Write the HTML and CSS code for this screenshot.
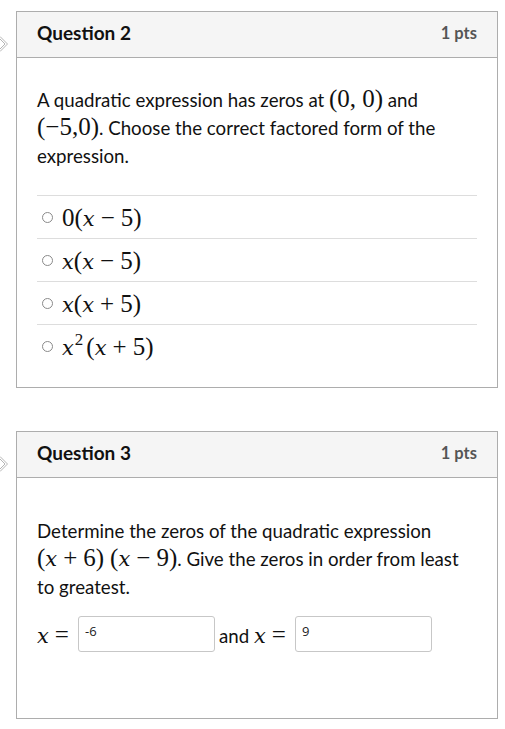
FILE: index.html
```
<!doctype html>
<html lang="en">
<head>
    <meta charset="UTF-8">
    <title>Quiz</title>
    <link rel="stylesheet" href="styles.css">
</head>
<body>
    <div class="question">
        <div class="flag">
            <svg width="16" height="16" viewBox="0 0 16 16"><path d="M0 0.5 L7.5 8 L0 15.5 M0 3 L5 8 L0 13" fill="none" stroke="#b5b5b5" stroke-width="1"/></svg>
        </div>
        <div class="card">
            <div class="header">
                <span class="title">Question 2</span>
                <span class="pts">1 pts</span>
            </div>
            <div class="body">
                <p class="text">A quadratic expression has zeros at <span class="math">(0,<span class="sp"></span>0)</span> and <span class="math">(−5,0)</span>. Choose the correct factored form of the expression.</p>
                <ul class="answers">
                    <li><span class="radio"></span><span class="math">0(<i>x</i><span class="op">−</span>5)</span></li>
                    <li><span class="radio"></span><span class="math"><i>x</i>(<i>x</i><span class="op">−</span>5)</span></li>
                    <li><span class="radio"></span><span class="math"><i>x</i>(<i>x</i><span class="op">+</span>5)</span></li>
                    <li><span class="radio"></span><span class="math"><i>x</i><sup>2</sup>(<i>x</i><span class="op">+</span>5)</span></li>
                </ul>
            </div>
        </div>
    </div>

    <div class="question">
        <div class="flag">
            <svg width="16" height="16" viewBox="0 0 16 16"><path d="M0 0.5 L7.5 8 L0 15.5 M0 3 L5 8 L0 13" fill="none" stroke="#b5b5b5" stroke-width="1"/></svg>
        </div>
        <div class="card">
            <div class="header">
                <span class="title">Question 3</span>
                <span class="pts">1 pts</span>
            </div>
            <div class="body body-fill">
                <p class="text">Determine the zeros of the quadratic expression <span class="math">(<i>x</i><span class="op">+</span>6)<span class="sp"></span>(<i>x</i><span class="op">−</span>9)</span>. Give the zeros in order from least to greatest.</p>
                <div class="fill">
                    <span class="math"><i>x</i><span class="op">=</span></span>
                    <input type="text" class="blank" value="-6">
                    <span>and <span class="math"><i>x</i><span class="op">=</span></span></span>
                    <input type="text" class="blank" value="9">
                </div>
            </div>
        </div>
    </div>
</body>
</html>
```
FILE: styles.css
```
/*reset*/
*{
    margin:0;
    padding:0;
}
ul{
    list-style: none;
}
body{
    font-family: Lato, "Liberation Sans", sans-serif;
    color: #2d3b45;
    background: #ffffff;
    padding-top: 11px;
}

.question{
    display: flex;
    margin-bottom: 43px;
}
.flag{
    width: 16px;
    padding-top: 25px;
}
.flag svg{
    display: block;
}
.card{
    width: 480px;
    border: 1px solid #adadad;
}
.header{
    display: flex;
    justify-content: space-between;
    align-items: center;
    box-sizing: border-box;
    height: 46px;
    padding: 0 20px 4px;
    background: #f5f5f5;
    border-bottom: 1px solid #adadad;
}
.title{
    font-size: 19px;
    font-weight: bold;
    color: #111111;
}
.pts{
    font-size: 16.5px;
    font-weight: bold;
    color: #555555;
}
.body{
    padding: 28px 20px 20px;
}
.body-fill{
    padding-top: 39px;
    height: 181px;
}
.text{
    font-size: 18.7px;
    line-height: 28px;
    color: #111111;
}
.math{
    font-family: "Liberation Serif", "DejaVu Serif", serif;
    font-size: 25px;
    line-height: 1;
    white-space: nowrap;
}
.math i{
    font-family: "DejaVu Serif", "Liberation Serif", serif;
    font-style: italic;
    font-size: 0.84em;
}
.math sup{
    font-size: 17px;
    line-height: 0;
    margin-left: 1px;
    margin-right: 3px;
}
.op{
    margin: 0 0.24em;
}
.sp{
    display: inline-block;
    width: 6px;
}

.answers{
    margin-top: 25px;
}
.answers li{
    display: flex;
    align-items: center;
    height: 42px;
    border-top: 1px solid #dddddd;
    color: #111111;
}
.radio{
    box-sizing: border-box;
    width: 11px;
    height: 11px;
    border: 1px solid #8a8a8a;
    border-radius: 50%;
    margin: 0 9px 0 5px;
}

.fill{
    display: flex;
    align-items: center;
    margin-top: 15px;
    font-size: 18.7px;
    color: #111111;
}
.blank{
    box-sizing: border-box;
    width: 137px;
    height: 36px;
    margin: 0 4px 0 3px;
    padding: 0 6px 6px;
    border: 1px solid #c7c7c7;
    border-radius: 3px;
    font-family: "Open Sans", "DejaVu Sans", sans-serif;
    font-size: 13px;
    color: #222222;
    outline: none;
}
```
